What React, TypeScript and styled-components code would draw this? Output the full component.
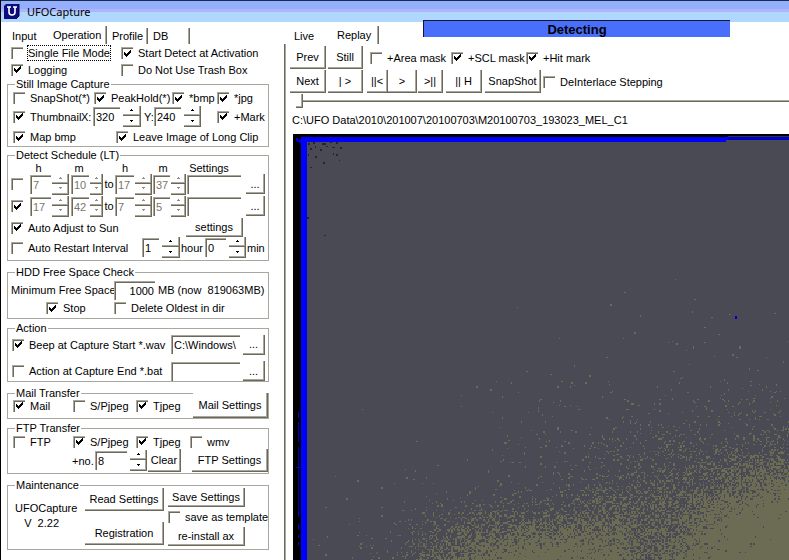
import React, { useId } from "react";
import styled, { createGlobalStyle, css } from "styled-components";

const DARK = "#6b695e";
const LIGHT = "#aca899";
const EDGE = "#a8a8a0";

const sunken = css`
  border: solid ${LIGHT};
  border-width: 1px 0 0 1px;
  border-radius: 0;
  box-shadow: inset 1px 1px ${DARK};
`;

const raised = css`
  border: solid ${DARK};
  border-width: 0 1px 1px 0;
  border-radius: 0;
  box-shadow: inset -1px -1px ${LIGHT};
`;

const GlobalStyle = createGlobalStyle`
  * { box-sizing: border-box; }
  html, body { margin: 0; padding: 0; }
  body, button, input {
    font-family: "Liberation Sans", Arial, sans-serif;
    font-size: 11px;
    line-height: 14px;
    color: #000;
  }
`;

const Window = styled.div`
  display: flex;
  flex-direction: column;
  min-height: 100vh;
  background: #fff;
  border-left: 1px solid #000;
`;

const TitleBar = styled.header`
  display: flex;
  align-items: center;
  gap: 7px;
  height: 22px;
  padding-left: 2px;
  border-top: 1px solid #1b2b4d;
  background: linear-gradient(#94b0fc 0 8px, #b0b4fc 8px 11px, #b0d8fe 11px);
`;

const Title = styled.h1`
  margin: 0;
  font: 11px/16px "Noto Sans", sans-serif;
`;

const Columns = styled.div`
  display: flex;
  flex: 1;
`;

const Controls = styled.section`
  flex: 0 0 283px;
  padding: 4px 15px 0 6px;
`;

const Viewer = styled.section`
  display: flex;
  flex: 1;
  flex-direction: column;
  min-width: 0;
`;

const Tabs = styled.nav`
  display: flex;
  align-items: flex-end;
  height: 18px;
`;

const Tab = styled.button<{ $width: number; $active?: boolean; $edge?: boolean }>`
  flex: 0 0 ${(p) => p.$width}px;
  height: ${(p) => (p.$active ? 18 : 16)}px;
  padding: 0 0 0 5px;
  border: 0;
  border-right: ${(p) => (p.$edge ? `1px solid ${DARK}` : "0")};
  box-shadow: ${(p) => (p.$edge ? `inset -1px 0 ${LIGHT}` : "none")};
  background: none;
  text-align: left;
  white-space: nowrap;
`;

const Row = styled.div<{ $cols: string; $height: number; $align?: string }>`
  display: grid;
  grid-template-columns: ${(p) => p.$cols};
  align-items: center;
  align-content: ${(p) => p.$align ?? "center"};
  height: ${(p) => p.$height}px;
  white-space: nowrap;
`;

const Group = styled.fieldset<{ $gap?: number }>`
  min-width: 0;
  margin: 0 0 ${(p) => p.$gap ?? 4}px;
  padding: 0;
  border: 1px solid ${EDGE};
`;

const Legend = styled.legend`
  height: 14px;
  margin-left: 7px;
  padding: 0 1px;
`;

const Indent = styled.div`
  padding: 0 0 3px 3px;
`;

const Option = styled.label`
  display: flex;
  align-items: center;
  gap: 5px;
  min-width: 0;
  height: 14px;
  white-space: nowrap;
`;

const OptionText = styled.span<{ $focus?: boolean; $clip?: boolean }>`
  ${(p) => p.$focus && css`outline: 1px dotted #000;`}
  ${(p) => p.$clip && css`overflow: hidden;`}
`;

const Box = styled.input`
  ${sunken}
  appearance: none;
  flex: none;
  width: 12px;
  height: 12px;
  margin: 0;
  background: #fff center / 10px 10px no-repeat;
  &:checked {
    background-image: url("data:image/svg+xml,%3Csvg xmlns='http://www.w3.org/2000/svg' viewBox='0 0 10 10'%3E%3Cpath d='M1 3h1v1h1v1h1v-1h1v-1h1v-1h1v-1h1v3h-1v1h-1v1h-1v1h-1v1h-1v-1h-1v-1h-1z'/%3E%3C/svg%3E");
  }
`;

const Field = styled.input<{ $muted?: boolean; $right?: boolean }>`
  ${sunken}
  width: 100%;
  min-width: 0;
  height: 19px;
  padding: 0 1px 0 2px;
  background: #fff;
  text-align: ${(p) => (p.$right ? "right" : "left")};
  color: ${(p) => (p.$muted ? "#77776b" : "#000")};
`;

const Button = styled.button<{ $height?: number }>`
  ${raised}
  width: 100%;
  height: ${(p) => p.$height ?? 23}px;
  padding: 0;
  background: #fff;
  white-space: nowrap;
`;

const SpinBox = styled.span`
  display: grid;
  grid-template-rows: 10px 11px;
  width: 100%;
`;

const SpinButton = styled.button`
  ${raised}
  display: grid;
  place-items: center;
  padding: 0;
  background: #fff;
`;

const Center = styled.span`
  text-align: center;
`;

const Maintenance = styled.div`
  display: grid;
  grid-template-columns: 73px 79px 77px 1fr;
  column-gap: 4px;
  height: 57px;
`;

const Version = styled.p`
  margin: 0;
  padding: 9px 0 0 7px;
  line-height: 15px;
  white-space: pre;
`;

const ButtonStack = styled.div<{ $gap: number }>`
  display: flex;
  flex-direction: column;
  gap: ${(p) => p.$gap}px;
  margin-top: -4px;
`;

const ViewerHead = styled.div`
  display: grid;
  grid-template-columns: 134px minmax(0, 307px) minmax(0, 1fr);
  height: 22px;
  padding-left: 5px;
`;

const ViewerTabs = styled(Tabs)`
  margin-top: 4px;
`;

const Status = styled.div`
  height: 17px;
  margin-top: -2px;
  border: solid #101830;
  border-width: 1px 0 0 1px;
  background: #4a6efc;
  font-weight: bold;
  font-size: 13px;
  line-height: 17px;
  text-align: center;
  overflow: hidden;
`;

const ViewerBody = styled.div`
  display: flex;
  flex: 1;
  flex-direction: column;
  gap: 1px;
  padding: 2px 0 0 5px;
  border-left: 1px solid ${DARK};
  box-shadow: inset 1px 0 ${LIGHT};
`;

const Slider = styled.input`
  appearance: none;
  width: calc(100% - 6px);
  height: 14px;
  margin: 0 0 0 6px;
  background: linear-gradient(${LIGHT} 0 1px, ${DARK} 1px 2px) 0 6px / 100% 2px no-repeat;
  &::-webkit-slider-thumb {
    ${raised}
    appearance: none;
    width: 7px;
    height: 14px;
    background: #fff;
  }
`;

const FilePath = styled.p`
  margin: 0;
  padding: 4px 0 6px 2px;
`;

const Video = styled.div`
  flex: 1 0 425px;
  margin-left: 3px;
  background: #4a4a55;
  svg { display: block; width: 100%; height: 100%; }
`;

function Check(props: { label: string; checked?: boolean; focus?: boolean; clip?: boolean }) {
  return (
    <Option>
      <Box type="checkbox" defaultChecked={props.checked} />
      <OptionText $focus={props.focus} $clip={props.clip}>{props.label}</OptionText>
    </Option>
  );
}

function Spin({ name, muted }: { name: string; muted?: boolean }) {
  const fill = muted ? "#8f8f85" : "#000";
  return (
    <SpinBox>
      <SpinButton type="button" aria-label={`Increase ${name}`}>
        <svg width="5" height="3"><path d="M2 0h1v1h1v1h-3v-1h1z" fill={fill} /></svg>
      </SpinButton>
      <SpinButton type="button" aria-label={`Decrease ${name}`}>
        <svg width="5" height="3"><path d="M1 0h3v1h-1v1h-1v-1h-1z" fill={fill} /></svg>
      </SpinButton>
    </SpinBox>
  );
}

function ScheduleRow({ name, values, checked }: { name: string; values: string[]; checked?: boolean }) {
  return (
    <Row $cols="19px 21px 1px 17px 2px 18px 1px 13px 12px 19px 1px 17px 1px 17px 1px 15px 1px 54px 5px 19px" $height={22}>
      <Box type="checkbox" aria-label={`${name} enabled`} defaultChecked={checked} />
      <Field $muted aria-label={`${name} start hour`} defaultValue={values[0]} />
      <span />
      <Spin muted name={`${name} start hour`} />
      <span />
      <Field $muted aria-label={`${name} start minute`} defaultValue={values[1]} />
      <span />
      <Spin muted name={`${name} start minute`} />
      <Center>to</Center>
      <Field $muted aria-label={`${name} end hour`} defaultValue={values[2]} />
      <span />
      <Spin muted name={`${name} end hour`} />
      <span />
      <Field $muted aria-label={`${name} end minute`} defaultValue={values[3]} />
      <span />
      <Spin muted name={`${name} end minute`} />
      <span />
      <Field aria-label={`${name} settings`} />
      <span />
      <Button $height={20} aria-label={`Browse ${name} settings`}>...</Button>
    </Row>
  );
}

const STOPS_X = [0, 54, 87, 120, 154, 187, 220, 270, 320, 354, 387, 437, 496];
const STOPS_Y = [145, 212, 245, 278, 312, 332, 352, 372, 392, 412, 425];
const DENSITY = [
  [0, 0, 0, 0, 0, 0, 0, 0, 0.001, 0.001, 0.001, 0.001, 0.001],
  [0, 0, 0, 0, 0, 0, 0.001, 0.001, 0.003, 0.003, 0.004, 0.006, 0.006],
  [0, 0, 0, 0, 0, 0.002, 0.006, 0.006, 0.006, 0.005, 0.008, 0.012, 0.02],
  [0.001, 0, 0.001, 0, 0, 0.004, 0.015, 0.012, 0.02, 0.03, 0.03, 0.04, 0.05],
  [0, 0, 0, 0.001, 0.003, 0.01, 0.015, 0.03, 0.08, 0.08, 0.14, 0.12, 0.16],
  [0.001, 0.001, 0.001, 0.002, 0.004, 0.015, 0.02, 0.03, 0.1, 0.12, 0.2, 0.38, 0.6],
  [0.001, 0.002, 0.003, 0.01, 0.01, 0.02, 0.03, 0.06, 0.2, 0.25, 0.3, 0.6, 0.9],
  [0.001, 0.003, 0.006, 0.02, 0.06, 0.1, 0.14, 0.18, 0.4, 0.34, 0.5, 0.88, 1],
  [0.002, 0.005, 0.02, 0.05, 0.22, 0.42, 0.5, 0.6, 0.7, 0.42, 0.6, 0.99, 1],
  [0.004, 0.01, 0.07, 0.12, 0.42, 0.75, 0.88, 0.94, 0.86, 0.48, 0.8, 0.99, 1],
  [0.005, 0.02, 0.08, 0.15, 0.6, 0.85, 0.97, 0.99, 0.9, 0.6, 0.85, 0.99, 1],
];

function locate(stops: number[], value: number): [number, number] {
  let i = 0;
  while (i < stops.length - 2 && value > stops[i + 1]) i += 1;
  return [i, (value - stops[i]) / (stops[i + 1] - stops[i])];
}

/* Sensor noise: cells are lit with a probability interpolated from DENSITY. */
function buildNoise(): string {
  let seed = 20100703;
  const random = () => {
    seed = (Math.imul(seed, 1664525) + 1013904223) >>> 0;
    return seed / 4294967296;
  };
  const cell = 1.4;
  const parts: string[] = [];
  for (let j = 0; j < 200; j += 1) {
    const y = Math.round(145 + j * cell);
    const height = Math.round(145 + (j + 1) * cell) - y;
    const [row, ty] = locate(STOPS_Y, y);
    for (let i = 0; i < 345; i += 1) {
      const x = Math.round(14 + i * cell);
      const width = Math.round(14 + (i + 1) * cell) - x;
      const [col, tx] = locate(STOPS_X, x);
      const top = DENSITY[row][col] * (1 - tx) + DENSITY[row][col + 1] * tx;
      const low = DENSITY[row + 1][col] * (1 - tx) + DENSITY[row + 1][col + 1] * tx;
      if (random() < top * (1 - ty) + low * ty) {
        parts.push(`M${x} ${y}h${width}v${height}h-${width}z`);
      }
    }
  }
  return parts.join("");
}

const NOISE = buildNoise();

const DARK_SPECKS =
  "M15 9h2v2h-2zM20 8h2v2h-2zM24 7h2v1h-2zM29 9h4v2h-4zM37 7h2v2h-2zM43 8h2v2h-2zM17 14h2v2h-2zM22 12h1v2h-1zM27 15h2v2h-2zM33 12h2v1h-2zM39 13h3v1h-3zM47 13h2v2h-2zM15 20h1v2h-1zM22 22h2v2h-2zM30 28h2v2h-2zM40 19h1v2h-1zM43 20h2v2h-2zM46 26h1v1h-1zM17 33h2v1h-2zM14 83h2v2h-2zM31 101h2v1h-2z";

function VideoFrame() {
  return (
    <svg viewBox="0 0 496 425" preserveAspectRatio="xMinYMin slice" role="img" aria-label="Captured frame" shapeRendering="crispEdges">
      <rect width="496" height="425" fill="#4a4a55" />
      <path d={NOISE} fill="#6c6c54" />
      <path d={DARK_SPECKS} fill="#26262a" />
      <rect width="496" height="3" fill="#000" />
      <rect width="8" height="425" fill="#000" />
      <path d="M8 3h426v3h-2v2H14v417H8z" fill="#00f" />
      <path d="M434 2h62v1h-62z" fill="#303040" />
      <path d="M434 3h62v3h-62z" fill="#00c" />
      <path d="M3 4h2v2h1v-1h2v4h-2v-1h-2v-1h-1zM5 277h1v6h-1zM5 287h1v20h-1zM5 312h1v70h-1zM3 332h5v1h-5zM5 389h1v6h-1zM5 400h1v3h-1zM5 407h1v4h-1z" fill="#0000d0" />
      <rect x="441" y="182" width="2" height="3" fill="#00c" />
    </svg>
  );
}

function Logo() {
  return (
    <svg width="17" height="17" viewBox="0 0 17 17" aria-hidden="true">
      <path d="M3 1h13v12l-3 3H1V3z" fill="#0c0c7c" />
      <path d="M16 1v12l-3 3" fill="none" stroke="#000040" />
      <path d="M4 4h4M10 4h4M6 4v5c0 4 6 4 6 0V4" fill="none" stroke="#fff" strokeWidth="1.600" />
    </svg>
  );
}

export default function App() {
  const freeSpace = useId();
  const ftpNumber = useId();
  return (
    <Window>
      <GlobalStyle />
      <TitleBar>
        <Logo />
        <Title>UFOCapture</Title>
      </TitleBar>
      <Columns>
        <Controls>
          <Tabs>
            <Tab $width={41}>Input</Tab>
            <Tab $width={59} $active $edge>Operation</Tab>
            <Tab $width={41} $edge>Profile</Tab>
            <Tab $width={42} $edge>DB</Tab>
          </Tabs>
          <Row $cols="4px 110px 1fr" $height={18}>
            <span />
            <Check label="Single File Mode" focus />
            <Check label="Start Detect at Activation" checked />
          </Row>
          <Row $cols="4px 110px 1fr" $height={15}>
            <span />
            <Check label="Logging" checked />
            <Check label="Do Not Use Trash Box" />
          </Row>

          <Group $gap={1}>
            <Legend>Still Image Capture</Legend>
            <Row $cols="5px 81px 78px 45px 1fr" $height={14}>
              <span />
              <Check label="SnapShot(*)" />
              <Check label="PeakHold(*)" checked />
              <Check label="*bmp" checked />
              <Check label="*jpg" checked />
            </Row>
            <Row $cols="5px 68px 12px 27px 3px 18px 3px 10px 27px 3px 17px 16px 1fr" $height={23}>
              <span />
              <Check label="Thumbnail" checked />
              <span>X:</span>
              <Field aria-label="Thumbnail width" defaultValue="320" />
              <span />
              <Spin name="width" />
              <span />
              <span>Y:</span>
              <Field aria-label="Thumbnail height" defaultValue="240" />
              <span />
              <Spin name="height" />
              <span />
              <Check label="+Mark" checked />
            </Row>
            <Row $cols="5px 103px 1fr" $height={18}>
              <span />
              <Check label="Map bmp" checked />
              <Check label="Leave Image of Long Clip" checked />
            </Row>
          </Group>

          <Group>
            <Legend>Detect Schedule (LT)</Legend>
            <Row $cols="3px 55px 26px 66px 10px 20px 42px" $height={11}>
              <span />
              <Center>h</Center>
              <Center>m</Center>
              <Center>h</Center>
              <Center>m</Center>
              <span />
              <Center>Settings</Center>
            </Row>
            <Indent>
              <ScheduleRow name="Schedule 1" values={["7", "10", "17", "37"]} />
              <ScheduleRow name="Schedule 2" values={["17", "42", "7", "5"]} checked />
              <Row $cols="175px 57px" $height={21}>
                <Check label="Auto Adjust to Sun" checked />
                <Button $height={19}>settings</Button>
              </Row>
              <Row $cols="131px 17px 3px 18px 1px 24px 21px 3px 17px 1px 1fr" $height={19}>
                <Check label="Auto Restart Interval" />
                <Field aria-label="Interval hours" defaultValue="1" />
                <span />
                <Spin name="hours" />
                <span />
                <span>hour</span>
                <Field aria-label="Interval minutes" defaultValue="0" />
                <span />
                <Spin name="minutes" />
                <span />
                <span>min</span>
              </Row>
            </Indent>
          </Group>

          <Group $gap={2}>
            <Legend>HDD Free Space Check</Legend>
            <Row $cols="3px 103px 41px 3px 1fr" $height={22}>
              <span />
              <label htmlFor={freeSpace}>Minimum Free Space</label>
              <Field id={freeSpace} $right defaultValue="1000" />
              <span />
              <span>MB (now&nbsp; 819063MB)</span>
            </Row>
            <Row $cols="38px 68px 1fr" $height={17} $align="start">
              <span />
              <Check label="Stop" checked />
              <Check label="Delete Oldest in dir" />
            </Row>
          </Group>

          <Group>
            <Legend>Action</Legend>
            <Row $cols="4px 159px 69px 3px 22px" $height={19}>
              <span />
              <Check label="Beep at Capture Start *.wav" checked />
              <Field aria-label="Start sound" defaultValue="C:\Windows\" />
              <span />
              <Button $height={20} aria-label="Browse start sound">...</Button>
            </Row>
            <Row $cols="4px 159px 69px 3px 22px" $height={27} $align="end">
              <span />
              <Check label="Action at Capture End *.bat" />
              <Field aria-label="End action" />
              <span />
              <Button $height={20} aria-label="Browse end action">...</Button>
            </Row>
          </Group>

          <Group $gap={2}>
            <Legend>Mail Transfer</Legend>
            <Row $cols="5px 60px 56px 7px 57px 75px" $height={18} $align="end">
              <span />
              <Check label="Mail" checked />
              <Check label="S/Pjpeg" clip />
              <span />
              <Check label="Tjpeg" checked />
              <Button $height={25}>Mail Settings</Button>
            </Row>
          </Group>

          <Group>
            <Legend>FTP Transfer</Legend>
            <Row $cols="5px 60px 56px 7px 54px 44px" $height={13}>
              <span />
              <Check label="FTP" />
              <Check label="S/Pjpeg" checked clip />
              <span />
              <Check label="Tjpeg" checked />
              <Check label="wmv" />
            </Row>
            <Row $cols="64px 23px 32px 3px 17px 1px 33px 11px 76px" $height={25}>
              <span />
              <label htmlFor={ftpNumber}>+no.</label>
              <Field id={ftpNumber} defaultValue="8" />
              <span />
              <Spin name="number" />
              <span />
              <Button>Clear</Button>
              <span />
              <Button>FTP Settings</Button>
            </Row>
          </Group>

          <Group>
            <Legend>Maintenance</Legend>
            <Maintenance>
              <Version>{"UFOCapture\n   V  2.22"}</Version>
              <ButtonStack $gap={11}>
                <Button>Read Settings</Button>
                <Button>Registration</Button>
              </ButtonStack>
              <ButtonStack $gap={3}>
                <Button $height={19}>Save Settings</Button>
                <Check label="save as template" />
                <Button $height={19}>re-install ax</Button>
              </ButtonStack>
            </Maintenance>
          </Group>
        </Controls>

        <Viewer>
          <ViewerHead>
            <ViewerTabs>
              <Tab $width={43}>Live</Tab>
              <Tab $width={47} $active $edge>Replay</Tab>
            </ViewerTabs>
            <Status role="status">Detecting</Status>
          </ViewerHead>
          <ViewerBody>
            <Row $cols="36px 2px 35px 7px 81px 75px 1fr" $height={23}>
              <Button>Prev</Button>
              <span />
              <Button>Still</Button>
              <span />
              <Check label="+Area mask" />
              <Check label="+SCL mask" checked />
              <Check label="+Hit mark" checked />
            </Row>
            <Row $cols="36px 2px 35px 4px 21px 29px 1px 25px 3px 36px 3px 56px 2px 1fr" $height={23}>
              <Button>Next</Button>
              <span />
              <Button>| &gt;</Button>
              <span />
              <Button>||&lt;</Button>
              <Button>&gt;</Button>
              <span />
              <Button>&gt;||</Button>
              <span />
              <Button>|| H</Button>
              <span />
              <Button>SnapShot</Button>
              <span />
              <Check label="DeInterlace Stepping" />
            </Row>
            <Slider type="range" aria-label="Frame position" min={0} max={100} defaultValue={0} />
            <FilePath>C:\UFO Data\2010\201007\20100703\M20100703_193023_MEL_C1</FilePath>
            <Video>
              <VideoFrame />
            </Video>
          </ViewerBody>
        </Viewer>
      </Columns>
    </Window>
  );
}
